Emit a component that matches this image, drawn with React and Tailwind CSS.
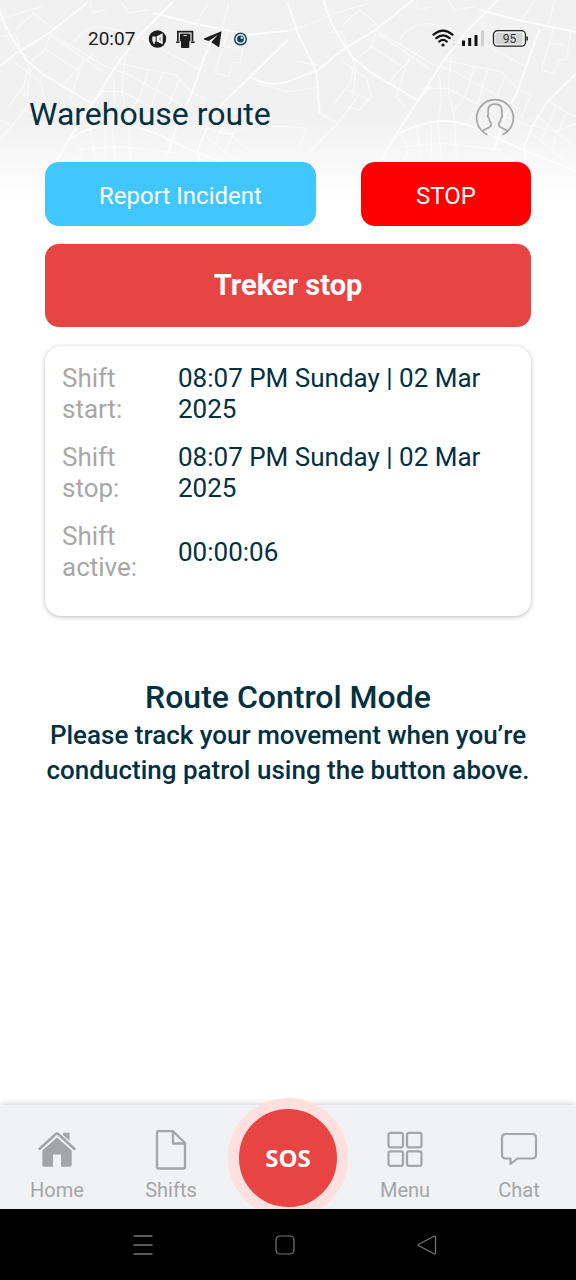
import React from "react";

const mainRoads = [
  "M0 10 L30 100 L85 215 L95 340",
  "M105 0 L130 70 Q165 130 192 170 L245 215 L390 302 L425 262",
  "M-114 231 Q-60 262 0 245 L90 210 L160 152 L262 90 L375 0",
  "M630 0 L540 90 L468 180 L385 310 L320 410 L280 480",
  "M755 90 L725 170 L690 270 L650 350 L618 450",
  "M320 410 Q380 368 470 362 Q540 366 640 420 L720 455 L980 560",
  "M575 30 L700 62 L860 95 L978 83",
  "M978 110 L864 222 L780 302 L735 375 L708 440 L715 500",
];

const sideRoads = [
  "M0 92 L60 75 L140 40 L240 10",
  "M30 185 L110 200 M-90 250 L0 275 L90 262",
  "M95 340 L150 370 L210 290 M150 370 L60 460",
  "M120 100 L160 95 L200 190 L185 250 L140 310",
  "M160 180 L235 235 L250 290 L215 330 L175 320 M205 200 L195 290 M180 270 L245 300",
  "M165 75 L215 30 L270 75 L250 140 L200 180",
  "M250 140 L345 200 L300 250 M270 100 L365 165 L420 205",
  "M262 90 L330 130 L430 190",
  "M335 120 Q360 75 420 70 L480 85 L540 110",
  "M345 200 L395 150",
  "M365 165 L325 290 L350 320",
  "M400 265 L480 265 L600 330 L730 380",
  "M430 190 L500 215 L600 270 L690 325",
  "M470 180 L560 200 L640 215 L690 270",
  "M455 230 L460 300 L450 370 L460 470 M490 160 L480 265 L500 360 L505 470",
  "M560 200 L530 290 L500 330 M600 210 L565 320 L540 370 M650 235 L610 330 L580 390",
  "M530 100 L620 150 L715 200 M590 60 L560 130",
  "M690 270 L730 285 L700 350",
  "M340 400 L360 450 L350 480 M385 375 L400 470 M430 366 L430 470",
  "M340 440 L460 430 L560 440 L640 450",
  "M700 62 L740 0 M780 80 L800 0",
  "M800 75 L760 210 L800 220 L812 180 L835 178 L850 90 M785 130 L830 135",
  "M735 375 L800 395 L864 370 L978 371 M780 302 L840 340 L900 360",
  "M750 350 L860 440 M730 400 L840 490 M800 330 L760 420 M830 345 L790 450",
  "M0 380 L55 385 L30 450",
  "M385 0 L390 30 L430 20 M480 0 L500 30 L560 20",
];

function MapTile() {
  return (
    <g fill="none" stroke="#fff" strokeLinejoin="round" strokeLinecap="round">
      {mainRoads.map((d) => (
        <path key={d} d={d} strokeWidth="6" strokeOpacity="0.75" />
      ))}
      {sideRoads.map((d) => (
        <path key={d} d={d} strokeWidth="4" strokeOpacity="0.5" />
      ))}
    </g>
  );
}

function MapBackdrop() {
  return (
    <svg
      aria-hidden="true"
      className="absolute inset-x-0 top-0 h-[210px] w-full"
      viewBox="0 0 576 210"
      preserveAspectRatio="xMinYMin slice"
    >
      <defs>
        <linearGradient id="fade" x1="0" y1="0" x2="0" y2="1">
          <stop offset="0.55" stopColor="#fff" stopOpacity="0" />
          <stop offset="0.95" stopColor="#fff" stopOpacity="1" />
        </linearGradient>
      </defs>
      <rect width="576" height="210" fill="#f1f1f1" />
      <g transform="translate(-38 3) scale(0.3333)">
        <MapTile />
      </g>
      <g transform="translate(288 0) scale(0.3333)">
        <MapTile />
      </g>
      <rect width="576" height="210" fill="url(#fade)" />
    </svg>
  );
}

function StatusBar() {
  return (
    <div className="flex h-[78px] items-center justify-between pr-[48px] pl-[88px] text-[#1c1c1c]">
      <div className="flex items-center">
        <span className="w-[60px] text-[19px] leading-6">20:07</span>
        <svg width="100" height="20" viewBox="0 0 100 20" aria-hidden="true">
          <circle cx="9.500" cy="10" r="8.700" fill="#1c1c1c" />
          <path d="M4.300 7.500h3.400v5H6.900v2.200H5.300v-2.200h-1zM8.700 7.300l6-3v10.900l-6-2.700z" fill="#f4f4f4" />
          <path d="M11 8.800v2.300l2 .9V7.800z" fill="#1c1c1c" opacity="0.35" />
          <path d="M29 1.800h16.300v10.500H29z" fill="#1c1c1c" />
          <path d="M31.300 12.500V4.200h11.700v8.300" fill="none" stroke="#f1f1f1" strokeWidth="1.200" />
          <rect x="33" y="4.800" width="8.300" height="14.200" rx="1" fill="#1c1c1c" />
          <path d="M35.500 6.500h3.300" stroke="#f1f1f1" strokeWidth="0.900" />
          <path d="M28 13.200h3.500M43 13.200h3.700" stroke="#1c1c1c" strokeWidth="1.500" />
          <path d="M73.500 2.300 56.500 9.300c-.9.400-.9 1.100 0 1.400l4.300 1.400L70 5.800l-6.700 7.200.2.300 6.400 4.400c.7.400 1.300.2 1.500-.7z" fill="#1c1c1c" />
          <circle cx="92.500" cy="10" r="5.800" fill="#e4f1f5" stroke="#154c66" strokeWidth="1.500" />
          <circle cx="92.500" cy="10" r="3.400" fill="#123f57" />
          <circle cx="93.800" cy="8.700" r="1.200" fill="#d8f0f6" />
        </svg>
      </div>
      <svg width="96" height="20" viewBox="0 0 96 20" role="img" aria-label="Battery 95 percent" className="font-[Roboto,sans-serif]">
        <g fill="none" stroke="#111" strokeWidth="2.200" strokeLinecap="round">
          <path d="M1.500 5.700Q11 -2.300 20.500 5.700" />
          <path d="M4.300 9.200Q11 3.400 17.700 9.200" />
          <path d="M7.200 12.600Q11 9.300 14.800 12.600" />
        </g>
        <circle cx="11" cy="16" r="1.600" fill="#111" />
        <path d="M20.500 12l1.500-2 1.500 2zM20.500 15l1.500 2 1.500-2z" fill="#d6d6d6" />
        <path d="M30 11.500h3v5.500h-3zM36.200 9h3v8h-3zM42.500 6h3v11h-3z" fill="#111" />
        <path d="M49 1.500h3V17h-3z" fill="#d0d0d0" />
        <rect x="61.500" y="1.700" width="32" height="15.500" rx="4" fill="#f3f3f3" stroke="#222" strokeWidth="1.300" />
        <rect x="63.500" y="3.700" width="27" height="11.500" rx="2" fill="#d4d4d4" />
        <path d="M95.200 7.500v4" stroke="#222" strokeWidth="1.500" />
        <text x="77.500" y="14" fontSize="12" textAnchor="middle" fill="#333">95</text>
      </svg>
    </div>
  );
}

const shiftRows = [
  ["Shift start:", "08:07 PM Sunday | 02 Mar 2025"],
  ["Shift stop:", "08:07 PM Sunday | 02 Mar 2025"],
  ["Shift active:", "00:00:06"],
];

function HomeIcon() {
  return (
    <svg width="40" height="40" viewBox="0 0 40 40" aria-hidden="true">
      <path d="M20 7.500 34.700 20.500V35c0 1-.6 1.700-1.700 1.700h-9V24.500h-8v12.200H7c-1.100 0-1.700-.7-1.700-1.700V20.500z" fill="#a4a5a7" />
      <path d="M26 2.800h6.500v12.500L26 9.500z" fill="#a4a5a7" />
      <path d="M2.200 19 18.800 3.800q1.200-1 2.400 0L37.800 19" fill="none" stroke="#f1f2f4" strokeWidth="5" />
      <path d="M2.500 19 18.800 4q1.200-1 2.400 0L37.500 19" fill="none" stroke="#a4a5a7" strokeWidth="2.500" strokeLinecap="round" />
    </svg>
  );
}

function ShiftsIcon() {
  return (
    <svg width="40" height="40" viewBox="0 0 40 40" aria-hidden="true" fill="none" stroke="#a4a5a7" strokeWidth="2.300" strokeLinejoin="round">
      <path d="M7.500 1.200H22L34 13v24q0 1.500-1.500 1.500h-25Q6 38.500 6 37V2.700q0-1.500 1.500-1.500z" />
      <path d="M22 1.500V13.500H34" />
    </svg>
  );
}

function MenuIcon() {
  return (
    <svg width="40" height="40" viewBox="0 0 40 40" aria-hidden="true" fill="none" stroke="#a4a5a7" strokeWidth="2.200">
      <rect x="3.500" y="2.800" width="14.500" height="14.500" rx="2" />
      <rect x="22" y="2.800" width="14.500" height="14.500" rx="2" />
      <rect x="3.500" y="21.300" width="14.500" height="14.500" rx="2" />
      <rect x="22" y="21.300" width="14.500" height="14.500" rx="2" />
    </svg>
  );
}

function ChatIcon() {
  return (
    <svg width="40" height="40" viewBox="0 0 40 40" aria-hidden="true" fill="none" stroke="#a4a5a7" strokeWidth="2.200" strokeLinejoin="round">
      <path d="M7 4h26q4 0 4 4v16.500q0 4-4 4H18.500L11.500 34v-5.500H7q-4 0-4-4V8q0-4 4-4z" />
    </svg>
  );
}

function NavItem({ icon, label }) {
  return (
    <a href="#" className="flex flex-col items-center gap-2 pt-[25px] text-[20px] leading-6 text-[#a4a5a7]">
      {icon}
      {label}
    </a>
  );
}

export default function App() {
  return (
    <div className="relative flex min-h-screen flex-col bg-white font-[Roboto,sans-serif] text-[#04303f]">
      <MapBackdrop />
      <div className="relative flex grow flex-col">
        <StatusBar />
        <header className="flex h-[84px] items-start justify-between pt-4 pr-[61px] pl-[29px]">
          <h1 className="text-[32px] leading-10">Warehouse route</h1>
          <button type="button" aria-label="Profile" className="mt-1">
            <svg width="40" height="40" viewBox="0 0 40 40" fill="none" stroke="#a6a6a6" strokeWidth="1.700">
              <path d="M12.500 36.700A18.300 18.300 0 1 1 27.500 36.700" />
              <path d="M7 33.500Q8.500 31.800 13 30c3-1.200 3.600-2.500 3.200-4.500-1.600-1.800-1.900-3-2.200-5.200-1.300-1-1.500-2.800-.7-4.300C12.500 9.500 14 6.200 20 6.200s7.500 3.300 6.700 9.800c.8 1.500.6 3.300-.7 4.300-.3 2.200-.6 3.400-2.200 5.200-.4 2 .2 3.300 3.200 4.500q4.500 1.800 6 3.500" />
            </svg>
          </button>
        </header>
        <main className="px-[45px]">
          <div className="flex gap-[45px] text-[24px] text-white">
            <button type="button" className="h-16 grow rounded-[14px] bg-[#41c6ff] pt-1">
              Report Incident
            </button>
            <button type="button" className="h-16 w-[35%] rounded-[14px] bg-[#fe0000] pt-1">
              STOP
            </button>
          </div>
          <button type="button" className="mt-[18px] h-[83px] w-full rounded-[14px] bg-[#e84444] text-[29px] font-bold text-white">
            Treker stop
          </button>
          <dl className="mt-[19px] rounded-[16px] bg-white px-[17px] pt-[17px] pb-4 text-[26px] leading-[31px] shadow-[0_1px_4px_rgba(0,0,0,0.28)]">
            {shiftRows.map(([label, value]) => (
              <div key={label} className="mb-[17px] flex items-center">
                <dt className="w-[116px] shrink-0 pr-7 text-[#a7a7a7]">{label}</dt>
                <dd>{value}</dd>
              </div>
            ))}
          </dl>
          <section className="mt-[62px] text-center font-medium">
            <h2 className="text-[32px] leading-[38px]">Route Control Mode</h2>
            <p className="mt-0.5 text-[26px] leading-[35px]">
              Please track your movement when you’re conducting patrol using the button above.
            </p>
          </section>
        </main>
      </div>
      <nav className="relative grid h-[104px] grid-cols-[1fr_1fr_120px_1fr_1fr] bg-[#f1f2f4] shadow-[0_-1px_6px_rgba(0,0,0,0.18)]">
        <NavItem icon={<HomeIcon />} label="Home" />
        <NavItem icon={<ShiftsIcon />} label="Shifts" />
        <div className="flex justify-center">
          <button
            type="button"
            className="absolute -top-[7px] size-[120px] rounded-full border-[11px] border-[#ffe0df] bg-[#e84444] font-['Open_Sans',sans-serif] text-[24px] font-bold text-white"
          >
            SOS
          </button>
        </div>
        <NavItem icon={<MenuIcon />} label="Menu" />
        <NavItem icon={<ChatIcon />} label="Chat" />
      </nav>
      <div className="relative flex h-[71px] items-center justify-center gap-[122px] bg-black pr-[6px]">
        <button type="button" aria-label="Recent apps">
          <svg width="20" height="20" viewBox="0 0 20 20" stroke="#777" strokeWidth="1.300">
            <path d="M.5 1h19M.5 10h19M.5 19h19" />
          </svg>
        </button>
        <button type="button" aria-label="Home screen">
          <svg width="20" height="20" viewBox="0 0 20 20" fill="none" stroke="#777" strokeWidth="1.200">
            <rect x="1" y="1" width="18" height="18" rx="4" />
          </svg>
        </button>
        <button type="button" aria-label="Back">
          <svg width="20" height="20" viewBox="0 0 20 20" fill="none" stroke="#777" strokeWidth="1.200" strokeLinejoin="round">
            <path d="M1.800 9.300 17 1.200q1.500-.6 1.500 1v15.600q0 1.600-1.500 1L1.800 10.700q-1-.7 0-1.400z" />
          </svg>
        </button>
      </div>
    </div>
  );
}
